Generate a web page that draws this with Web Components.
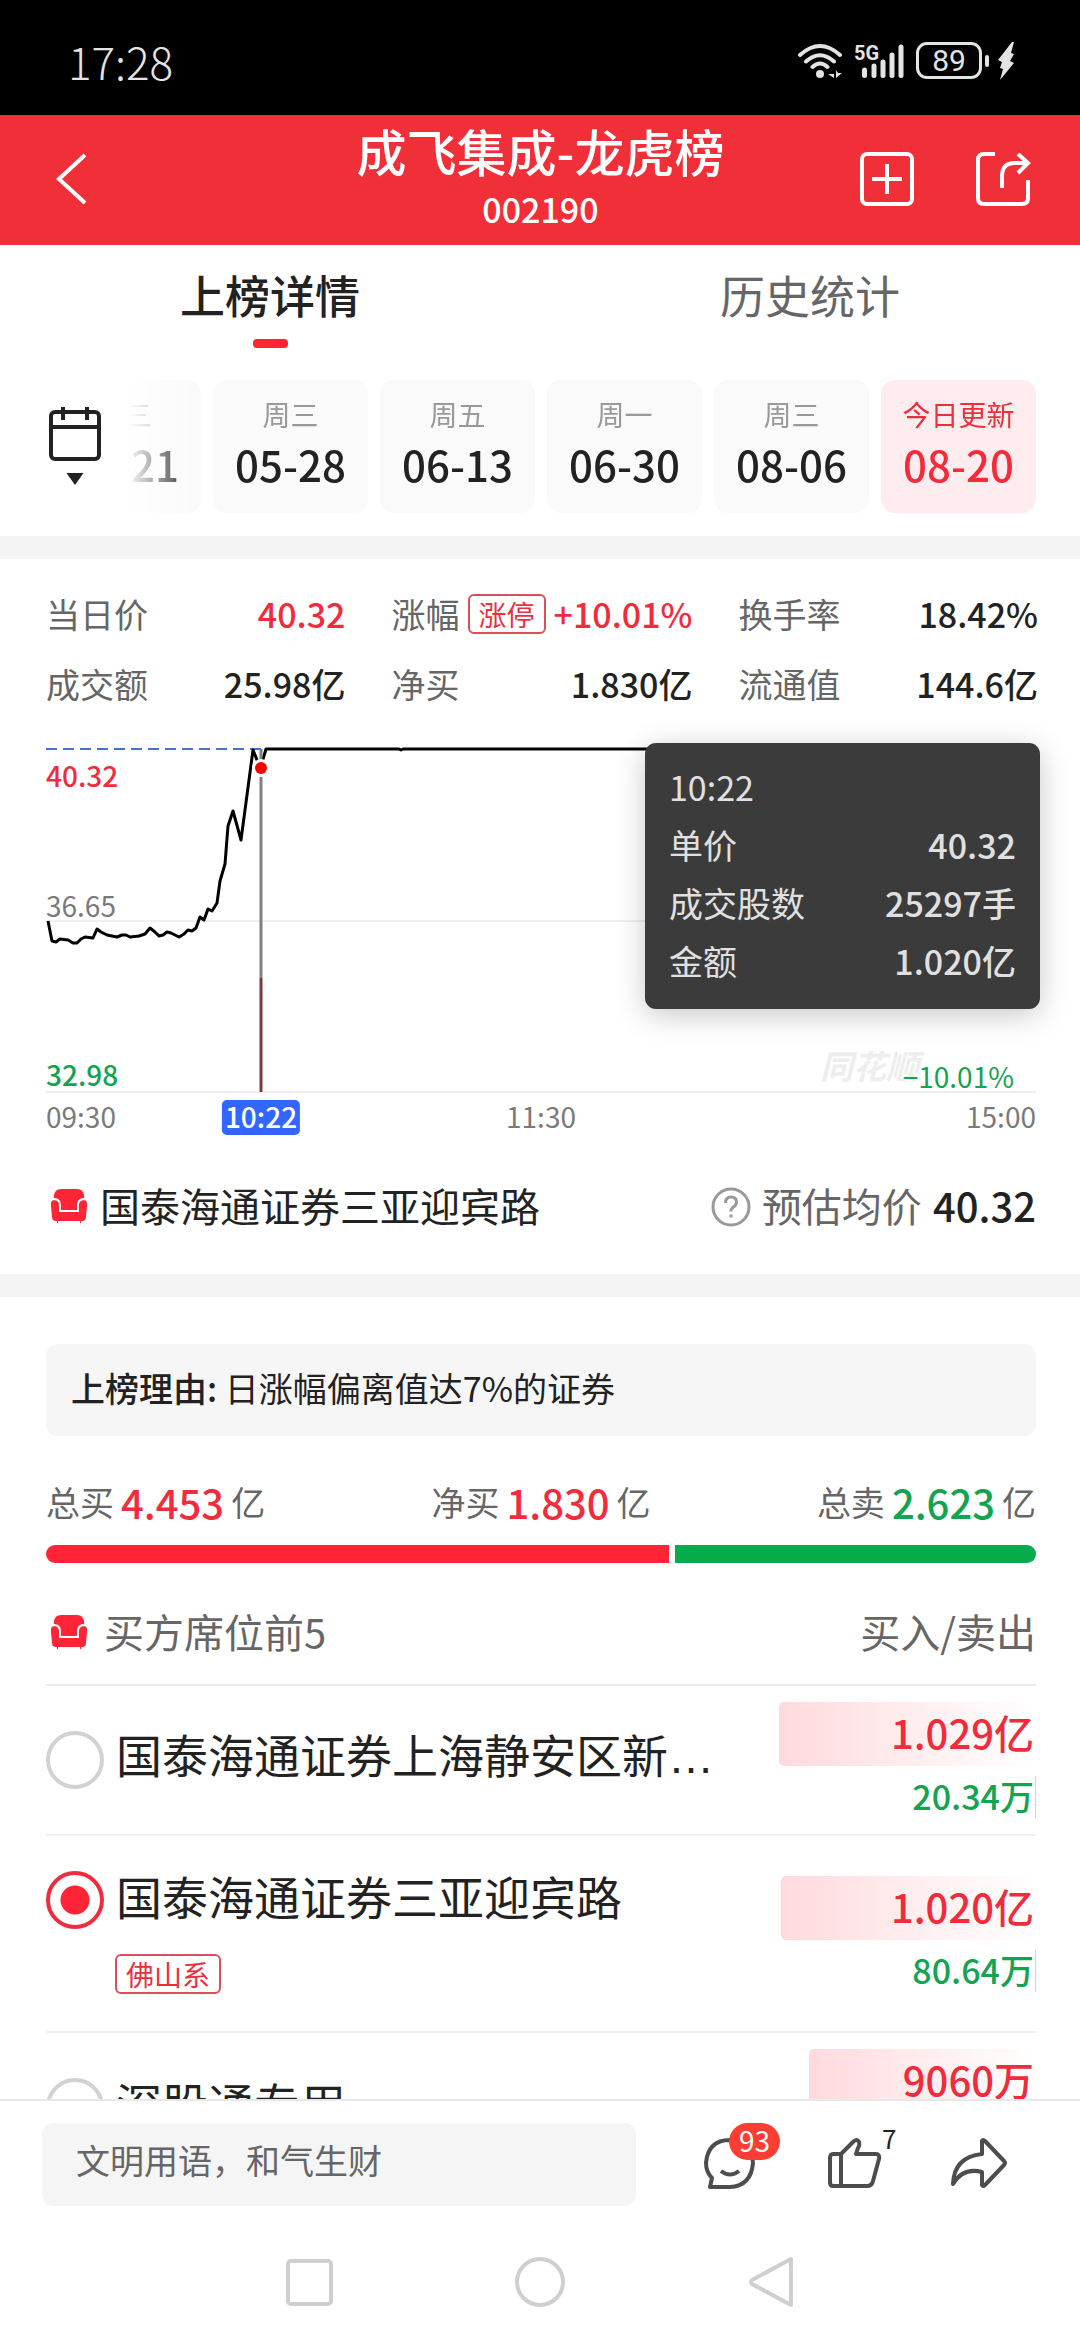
<!DOCTYPE html>
<html lang="zh-CN">
<head>
<meta charset="utf-8">
<meta name="viewport" content="width=device-width, initial-scale=1">
<title>成飞集成-龙虎榜</title>
<style>
  :root {
    --red: #ff2436;
    --green: #07ab4b;
    --ink: #222;
    --muted: #666;
    --faint: #999;
    --band: #f4f4f4;
    --edge: 44px;
    --body: 34px;
    --large: 40px;
    --small: 28px;
  }
  body {
    margin: 0;
    background: #fff;
    color: var(--ink);
    font-family: "Noto Sans CJK SC", "Noto Sans", sans-serif;
    font-size: 34px;
  }
</style>
</head>
<body>
<lhb-app></lhb-app>

<script>
const RESET = `
  *, *::before, *::after { box-sizing: border-box; }
  button, input { font: inherit; color: inherit; background: none; border: 0; padding: 0; margin: 0; }
  h1, h2, p, dl, dt, dd, ul { margin: 0; padding: 0; font-size: inherit; font-weight: inherit; }
  svg { display: block; flex: none; }
`;

function define(name, render) {
  customElements.define(name, class extends HTMLElement {
    constructor() {
      super();
      this.attachShadow({ mode: "open" });
    }
    connectedCallback() {
      const t = document.createElement("template");
      t.innerHTML = "<style>" + RESET + "</style>" + render(this);
      this.shadowRoot.replaceChildren(t.content.cloneNode(true));
    }
  });
}

/* ---------- system bars ---------- */

define("status-bar", () => `
  <style>
    :host { display: flex; align-items: center; justify-content: space-between;
      height: 115px; padding: 6px 64px 0 68px; background: #000; color: #e4e4e4; }
    time { font-size: 44px; font-weight: 300; line-height: 50px; }
    .icons { display: flex; align-items: center; }
    .cell { display: grid; margin: 0 12px 0 12px; }
    .cell > * { grid-area: 1 / 1; }
    .cell span { font: 700 20px/20px Roboto, sans-serif; }
    .bat { width: 66px; height: 37px; border: 3px solid #e4e4e4; border-radius: 11px;
      display: grid; place-items: center; font: 400 30px/31px Roboto, sans-serif; }
    .nub { width: 4px; height: 12px; border-radius: 2px; background: #e4e4e4; margin: 0 8px 0 3px; }
  </style>
  <time>17:28</time>
  <div class="icons">
    <svg width="44" height="36" viewBox="0 0 44 36" fill="none" stroke="#e4e4e4" stroke-width="4" stroke-linecap="round">
      <path d="M2 12Q22-6 42 12M8 18.500Q22 6 36 18.500M14.500 24Q22 17 29.500 24"/>
      <circle cx="22" cy="31" r="4" fill="#e4e4e4" stroke="none"/>
      <path d="M36 27v8l-6-4h6M38 27v8l6-5h-4z" fill="#e4e4e4" stroke="none"/>
    </svg>
    <div class="cell">
      <svg width="50" height="36" viewBox="0 0 50 36" fill="none" stroke="#e4e4e4" stroke-width="5" stroke-linecap="round">
        <path d="M10.500 27v5.500M20 23v9.500M29 19v13.500M38 12v20.500M47 4v28.500"/>
      </svg>
      <span>5G</span>
    </div>
    <div class="bat">89</div><div class="nub"></div>
    <svg width="19" height="38" viewBox="0 0 19 38" fill="#e4e4e4"><path d="M15 0L1 18l4 2-2 6 3 1-3 11L17 21l-4-2 4-7-3-1 3-11z"/></svg>
  </div>
`);

define("nav-bar", () => `
  <style>
    :host { display: flex; align-items: center; justify-content: center; gap: 176px; height: 113px; padding-bottom: 2px; }
    button { display: block; }
  </style>
  <button aria-label="最近任务"><svg width="54" height="54" viewBox="0 0 54 54" fill="none" stroke="#cfcfcf" stroke-width="4"><rect x="5" y="5" width="43" height="43" rx="3"/></svg></button>
  <button aria-label="主页"><svg width="54" height="54" viewBox="0 0 54 54" fill="none" stroke="#cfcfcf" stroke-width="4"><circle cx="27" cy="26" r="23"/></svg></button>
  <button aria-label="返回"><svg width="54" height="54" viewBox="0 0 54 54" fill="none" stroke="#cfcfcf" stroke-width="4" stroke-linejoin="round"><path d="M48 3v46L9 28q-2-2 0-4z"/></svg></button>
`);

/* ---------- header and tabs ---------- */

define("app-header", () => `
  <style>
    :host { display: grid; grid-template-columns: 1fr auto 1fr; align-items: center;
      height: 130px; padding: 0 49px 0 50px; background: #f12f38; color: #fff; }
    .title { align-self: start; display: grid; gap: 4px; text-align: center; }
    h1 { font-size: 50px; font-weight: 500; line-height: 70px; }
    p { font-size: var(--body); font-weight: 500; line-height: 40px; }
    .tools { display: flex; justify-content: flex-end; gap: 60px; padding-bottom: 2px; }
    button { display: block; }
    .back { justify-self: start; padding-bottom: 2px; }
  </style>
  <button class="back" aria-label="返回">
    <svg width="44" height="56" viewBox="0 0 44 56" fill="none" stroke="#fff" stroke-width="4"><path d="M35 4L9 28l26 24"/></svg>
  </button>
  <div class="title"><h1><slot name="name"></slot></h1><p><slot name="code"></slot></p></div>
  <div class="tools">
    <button aria-label="加自选">
      <svg width="56" height="56" viewBox="0 0 56 56" fill="none" stroke="#fff" stroke-width="4"><rect x="3" y="3" width="50" height="50" rx="5"/><path d="M28 13v30M13 28h30"/></svg>
    </button>
    <button aria-label="分享">
      <svg width="56" height="56" viewBox="0 0 56 56" fill="none" stroke="#fff" stroke-width="4"><path d="M20 3H9q-6 0-6 6v38q0 6 6 6h38q6 0 6-6V29M27 37V25q0-13 13-13h12M43 3l10 9-10 10"/></svg>
    </button>
  </div>
`);

define("tab-bar", () => `
  <style>
    :host { display: grid; grid-template-columns: 1fr 1fr; padding-top: 20px; }
    button { display: flex; flex-direction: column; align-items: center; gap: 14px;
      font-size: 45px; line-height: 60px; color: var(--muted); }
    button::after { content: ""; width: 35px; height: 9px; border-radius: 4px; }
    .on { color: var(--ink); font-weight: 500; }
    .on::after { background: var(--red); }
  </style>
  <button class="on" role="tab" aria-selected="true">上榜详情</button>
  <button role="tab" aria-selected="false">历史统计</button>
`);

/* ---------- date strip ---------- */

define("date-card", el => `
  <style>
    :host { display: block; flex: none; width: 155px; --bg: #fafafa; --top: var(--faint); --num: var(--ink); }
    :host([active]) { --bg: #ffecee; --top: #e8303f; --num: #f52b3c; }
    button { display: flex; flex-direction: column; align-items: center; width: 100%; height: 133px;
      padding-top: 14px; border-radius: 14px; background: var(--bg); }
    .day { font-size: var(--small); line-height: 40px; color: var(--top); }
    .date { font-size: 42px; font-weight: 500; line-height: 60px; color: var(--num); }
  </style>
  <button><span class="day">${el.getAttribute("day")}</span><span class="date"><slot></slot></span></button>
`);

define("date-strip", () => `
  <style>
    :host { display: flex; align-items: center; gap: 20px; padding: 32px var(--edge) 23px 46px; }
    .cal { display: flex; flex-direction: column; align-items: center; }
    .list { flex: 1; min-width: 0; display: flex; justify-content: flex-end; gap: 12px; overflow: hidden;
      -webkit-mask-image: linear-gradient(to right, transparent 3px, #000 72px);
      mask-image: linear-gradient(to right, transparent 3px, #000 72px); }
  </style>
  <button class="cal" aria-label="选择日期">
    <svg width="58" height="84" viewBox="0 0 58 84" fill="none" stroke="#222" stroke-width="4">
      <rect x="5" y="7" width="48" height="47" rx="4"/><path d="M5 22h48M17 2v13M41 2v13"/>
      <path d="M20.500 68h17L29 80z" fill="#222" stroke="none"/>
    </svg>
  </button>
  <div class="list"><slot></slot></div>
`);

define("section-gap", () => `<style>:host { display: block; height: 23px; background: var(--band); }</style>`);

/* ---------- stats ---------- */

define("stat-cell", el => `
  <style>
    :host { display: block; font-size: var(--body); line-height: 50px; }
    dl { display: flex; align-items: center; gap: 8px; height: 70px; white-space: nowrap; }
    dt { color: var(--muted); }
    dd { margin-left: auto; font-weight: 500; color: var(--ink); }
    :host([up]) dd { color: #ef2c3d; }
    ::slotted(tag-box) { flex: none; }
  </style>
  <dl><dt>${el.getAttribute("label")}</dt><slot name="tag"></slot><dd><slot></slot></dd></dl>
`);

define("tag-box", () => `
  <style>
    :host { display: inline-block; padding: 0 9px; border: 2px solid #d9505a; border-radius: 6px;
      color: #e8303f; font-size: var(--small); line-height: 36px; }
  </style><slot></slot>
`);

define("stat-grid", () => `
  <style>:host { display: grid; grid-template-columns: repeat(3, 1fr); column-gap: 46px; padding: 20px 42px 0 46px; }</style>
  <slot></slot>
`);

/* ---------- intraday chart ---------- */

define("price-chart", () => `
  <style>
    :host { display: block; padding: 27px var(--edge) 0 46px; font-size: var(--small); line-height: 34px; color: #7a7a7a; }
    .plot { position: relative; }
    .plot svg { width: 100%; height: 348px; overflow: visible; }
    .plot span { position: absolute; left: 0; }
    .top { top: 12px; color: #ef2c3d; font-weight: 500; }
    .mid { top: 142px; }
    .low { top: 311px; color: #14a350; font-weight: 500; }
    .plot .pct { left: auto; right: 22px; top: 313px; color: #14a350; }
    .plot .mark { left: auto; right: 117px; top: 299px; line-height: 40px; font-size: 33px; font-weight: 700; font-style: italic; color: #eee; }
    .axis { position: relative; display: flex; justify-content: space-between; margin-top: 6px; line-height: 33px; padding-bottom: 2px; }
    .now { position: absolute; left: 215px; transform: translateX(-50%); padding: 0 3px 2px; border-radius: 5px; background: #36f; color: #fff; font-weight: 500; }
    ::slotted(trade-tip) { position: absolute; right: -4px; top: -3px; }
  </style>
  <div class="plot">
    <svg viewBox="0 0 990 348" preserveAspectRatio="none" fill="none">
      <path d="M0 175H990M0 346H990" stroke="#f0f0f0" stroke-width="2"/>
      <path d="M0 3H215" stroke="#4a6fd0" stroke-width="2" stroke-dasharray="11 6"/>
      <path d="M2 175L6 195 10 196 14 193 22 194 27 197 31 197 35 193 39 191 47 192 51 183 55 186 61 189 71 191 76 189 80 189 84 191 93 190 99 188 104 182 109 186 113 190 117 189 121 186 125 187 133 191 138 188 142 184 146 185 150 182 154 171 158 174 162 163 166 165 171 157 174 135 179 118 182 80 187 65 195 94 207 4 211 14 215 20 220 3H353L355 4 357 3H990" stroke="#000" stroke-width="3" stroke-linejoin="round"/>
      <path d="M215 3V232" stroke="#808080" stroke-width="3"/>
      <path d="M215 232V346" stroke="#7a3a42" stroke-width="3"/>
      <circle cx="215" cy="22" r="9" fill="#fff"/><circle cx="215" cy="22" r="6" fill="#f00"/>
    </svg>
    <span class="top">40.32</span><span class="mid">36.65</span><span class="low">32.98</span>
    <span class="mark">同花顺</span><span class="pct">−10.01%</span>
    <slot></slot>
  </div>
  <div class="axis"><span>09:30</span><span class="now">10:22</span><span>11:30</span><span>15:00</span></div>
`);

define("trade-tip", () => `
  <style>
    :host { display: block; width: 395px; padding: 15px 24px 19px; border-radius: 11px; background: #3b3b3b;
      box-shadow: 0 6px 30px rgba(0,0,0,.22); color: #e0e0e0; font-size: var(--body); line-height: 58px; }
    dl > div { display: flex; justify-content: space-between; }
    dd { font-weight: 500; }
  </style>
  <p>10:22</p>
  <dl>
    <div><dt>单价</dt><dd>40.32</dd></div>
    <div><dt>成交股数</dt><dd>25297手</dd></div>
    <div><dt>金额</dt><dd>1.020亿</dd></div>
  </dl>
`);

/* ---------- seat header, reason, totals ---------- */

define("seat-icon", () => `
  <style>:host { display: block; flex: none; }</style>
  <svg width="46" height="40" viewBox="0 0 46 40" fill="#ff2436">
    <path d="M15 2h16q6 0 7 6l1 18H7L8 8q1-6 7-6z"/>
    <path d="M9 12q5 1 5 6v6h18v-6q0-5 5-6 6 0 5 7l-1 11q0 5-5 5v2h-3v-2H13v2h-3v-2q-5 0-5-5L4 19q-1-7 5-7z" stroke="#fff" stroke-width="2"/>
  </svg>
`);

define("seat-summary", () => `
  <style>
    :host { display: flex; align-items: center; padding: 40px var(--edge) 35px 46px; font-size: var(--large); line-height: 60px; }
    h2 { margin-left: 8px; }
    h2, span, b { padding-bottom: 4px; }
    .avg { margin-left: auto; display: flex; align-items: center; gap: 11px; color: var(--muted); }
    b { color: var(--ink); font-weight: 500; }
  </style>
  <seat-icon></seat-icon>
  <h2>国泰海通证券三亚迎宾路</h2>
  <div class="avg">
    <svg width="40" height="40" viewBox="0 0 40 40" fill="none" stroke="#999" stroke-width="3"><circle cx="20" cy="20" r="18"/><path d="M14.500 16q0-6 5.500-6t5.500 5q0 3-3 5t-2.500 4.500M20 27.500v3"/></svg>
    <span>预估均价</span><b>40.32</b>
  </div>
`);

define("reason-box", () => `
  <style>
    :host { display: block; margin: 47px var(--edge) 0 46px; padding: 14px 25px 18px; border-radius: 12px;
      background: #f6f6f6; font-size: var(--body); line-height: 60px; }
    b { font-weight: 500; }
  </style>
  <p><b>上榜理由:</b> <slot></slot></p>
`);

define("net-totals", () => `
  <style>
    :host { display: block; padding: 41px var(--edge) 0 46px; }
    .nums { display: flex; justify-content: space-between; height: 50px; font-size: var(--body); line-height: 50px; color: var(--muted); }
    p { display: flex; align-items: center; gap: 7px; }
    b { font-size: var(--large); font-weight: 500; color: #f22c3d; }
    .sell { color: #12a44e; }
    .bar { display: flex; gap: 6px; height: 18px; margin-top: 18px; border-radius: 9px; overflow: hidden; }
    .bar i { flex: 623; background: var(--red); }
    .bar i + i { flex: 361; background: var(--green); }
  </style>
  <div class="nums">
    <p>总买<b>4.453</b>亿</p><p>净买<b>1.830</b>亿</p><p>总卖<b class="sell">2.623</b>亿</p>
  </div>
  <div class="bar"><i></i><i></i></div>
`);

/* ---------- seat list ---------- */

define("seat-list", () => `
  <style>
    :host { display: block; padding: 38px var(--edge) 0 46px; }
    header { display: flex; align-items: center; padding-bottom: 19px; border-bottom: 2px solid #ebebeb;
      font-size: var(--large); line-height: 60px; color: var(--muted); }
    h2 { margin: 0 auto 0 12px; }
    h2, span { padding-bottom: 4px; }
  </style>
  <header><seat-icon></seat-icon><h2>买方席位前5</h2><span>买入/卖出</span></header>
  <slot></slot>
`);

define("seat-row", el => `
  <style>
    :host { display: flex; align-items: center; justify-content: space-between; padding: 16px 0;
      border-bottom: 2px solid #f0f0f0; }
    :host([tall]) { padding: 35px 0; }
    .pick { display: flex; align-items: center; gap: 12px; height: 58px; font-size: 46px; line-height: 58px; }
    label { display: block; padding-bottom: 10px; white-space: nowrap; }
    .dots { font-family: "Liberation Sans", sans-serif; }
    input { appearance: none; flex: none; width: 58px; height: 58px; border: 4px solid #d2d2d2; border-radius: 50%; }
    input:checked { border-color: #ee2c3d; background: radial-gradient(circle, var(--red) 14px, transparent 15px); }
    ::slotted(tag-box) { margin: 25px 0 0 69px; }
    .sums { flex: none; display: flex; flex-direction: column; align-items: flex-end; gap: 10px; font-weight: 500; }
    .buy { width: ${el.getAttribute("bar")}px; padding: 0 2px 4px 0; border-radius: 5px 0 0 5px; text-align: right;
      background: linear-gradient(to right, #ffdadd, #fff); color: #ef2c3d; font-size: var(--large); line-height: 60px; }
    .sell { height: 42px; padding-right: 1px; border-right: 1px solid #b4e4c6; color: #14a350; font-size: var(--body); line-height: 40px; }
  </style>
  <div>
    <div class="pick"><input type="radio" id="r" name="seat"${el.hasAttribute("checked") ? " checked" : ""}><label for="r">${el.getAttribute("name")}${el.hasAttribute("cut") ? '<span class="dots">…</span>' : ""}</label></div>
    <slot></slot>
  </div>
  <div class="sums"><span class="buy">${el.getAttribute("buy")}</span><span class="sell">${el.getAttribute("sell") || ""}</span></div>
`);

/* ---------- comment bar ---------- */

define("comment-bar", () => `
  <style>
    :host { display: flex; align-items: center; height: 128px; padding: 0 72px 0 42px; border-top: 2px solid #e8e8e8; background: #fff; }
    input { flex: 1; min-width: 0; height: 83px; padding: 0 34px 10px; border-radius: 11px; background: #f5f5f5; font-size: var(--body); }
    input::placeholder { color: var(--muted); opacity: 1; }
    button { position: relative; display: block; margin-left: 64px; }
    .tools { display: flex; padding-bottom: 4px; }
    .badge, .count { position: absolute; font-size: var(--small); line-height: 37px; }
    .badge { left: 29px; top: -11px; height: 37px; padding: 0 10px; border-radius: 19px; background: #fb3d33; color: #fff; line-height: 34px; }
    .count { left: 58px; top: -15px; color: var(--ink); font-size: 26px; }
  </style>
  <input type="text" aria-label="评论" placeholder="文明用语，和气生财">
  <div class="tools">
    <button aria-label="评论">
      <svg width="60" height="56" viewBox="0 0 60 56" fill="none" stroke="#4d4d4d" stroke-width="4" stroke-linejoin="round">
        <path d="M12 44Q6 38 6 29 8 6 30 6 52 7 53 29 51 52 30 53H10z"/><path d="M21 37q9 7 18 0"/>
      </svg>
      <span class="badge">93</span>
    </button>
    <button aria-label="点赞">
      <svg width="60" height="56" viewBox="0 0 60 56" fill="none" stroke="#4d4d4d" stroke-width="4" stroke-linejoin="round">
        <path d="M9 20h8L29 8q4-4 6 0 1 3-1 6l-2 6h20q4 0 3 5l-6 22q-1 5-6 5H9q-3 0-3-4V24q0-4 3-4M17 20v32"/>
      </svg>
      <span class="count">7</span>
    </button>
    <button aria-label="转发">
      <svg width="60" height="56" viewBox="0 0 60 56" fill="none" stroke="#4d4d4d" stroke-width="4" stroke-linejoin="round">
        <path d="M34 7q1-2 3 0l19 20q2 2 0 4L37 51q-2 2-3 0V38Q15 33 5 50 6 23 34 20z"/>
      </svg>
    </button>
  </div>
`);

/* ---------- page ---------- */

define("lhb-app", () => `
  <style>
    :host { display: flex; flex-direction: column; height: 100vh; overflow: hidden; background: #fff; }
    main { flex: 1; min-height: 0; overflow: hidden; }
    footer { flex: none; background: #fff; }
  </style>
  <status-bar></status-bar>
  <app-header><span slot="name">成飞集成-龙虎榜</span><span slot="code">002190</span></app-header>
  <main>
    <tab-bar></tab-bar>
    <date-strip>
      <date-card day="周三">05-21</date-card>
      <date-card day="周三">05-28</date-card>
      <date-card day="周五">06-13</date-card>
      <date-card day="周一">06-30</date-card>
      <date-card day="周三">08-06</date-card>
      <date-card day="今日更新" active>08-20</date-card>
    </date-strip>
    <section-gap></section-gap>
    <stat-grid>
      <stat-cell label="当日价" up>40.32</stat-cell>
      <stat-cell label="涨幅" up><tag-box slot="tag">涨停</tag-box>+10.01%</stat-cell>
      <stat-cell label="换手率">18.42%</stat-cell>
      <stat-cell label="成交额">25.98亿</stat-cell>
      <stat-cell label="净买">1.830亿</stat-cell>
      <stat-cell label="流通值">144.6亿</stat-cell>
    </stat-grid>
    <price-chart><trade-tip></trade-tip></price-chart>
    <seat-summary></seat-summary>
    <section-gap></section-gap>
    <reason-box>日涨幅偏离值达7%的证券</reason-box>
    <net-totals></net-totals>
    <seat-list>
      <seat-row name="国泰海通证券上海静安区新" cut buy="1.029亿" sell="20.34万" bar="257"></seat-row>
      <seat-row name="国泰海通证券三亚迎宾路" checked tall buy="1.020亿" sell="80.64万" bar="255"><tag-box>佛山系</tag-box></seat-row>
      <seat-row name="深股通专用" buy="9060万" bar="227"></seat-row>
    </seat-list>
  </main>
  <footer>
    <comment-bar></comment-bar>
    <nav-bar></nav-bar>
  </footer>
`);
</script>
</body>
</html>
